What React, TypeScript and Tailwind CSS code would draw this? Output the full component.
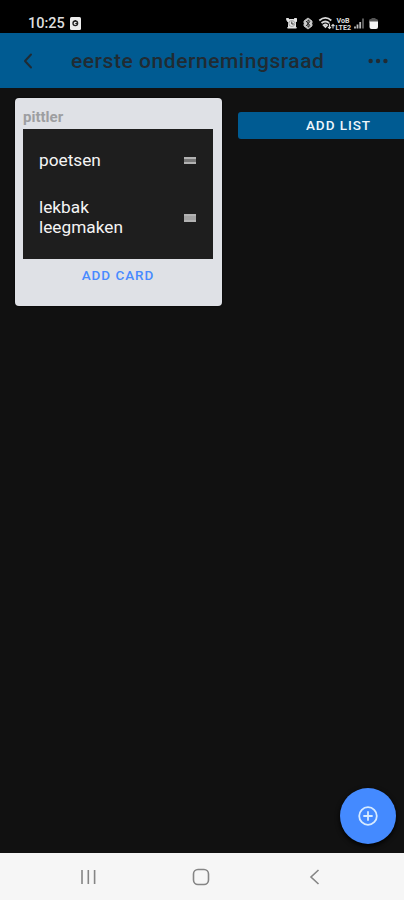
import React from "react";

function StatusBar() {
  return (
    <div className="flex h-[33px] shrink-0 items-end justify-between bg-black pr-[25px] pl-7">
      <div className="flex h-5 items-start gap-[6px]">
        <span className="w-[36px] pt-px text-[14.5px] leading-5 font-medium whitespace-nowrap text-[#dedede]">10:25</span>
        <svg className="mt-[4px]" width="11" height="13" viewBox="0 0 11 13">
          <rect width="11" height="13" rx="1.5" fill="#ededed" />
          <circle cx="5.3" cy="6.3" r="2.3" fill="none" stroke="#222" strokeWidth="1.4" />
          <path d="M5.3 6.5h2M5.3 3v1" stroke="#222" strokeWidth="1.2" />
        </svg>
      </div>
      <svg width="94" height="20" viewBox="285 13 94 20" fill="none" stroke="#d8d8d8">
        <path d="M286.5 18.5h2l1 1h4l1-1h2v3l-1 1v4.5l1 1h-9l1-1v-4.5l-1.500-2z" fill="#e4e4e4" stroke="#e4e4e4" />
        <circle cx="291.800" cy="23.500" r="3" stroke="#888" strokeWidth=".7" />
        <path d="M291.800 21.500v2.500h2" stroke="#333" />
        <path d="M308 18l4 3v5l-4 3l-4-3v-5z" fill="#d0d0d0" stroke="#bdbdbd" />
        <path d="M306 21l4 4.500l-2 1.800v-7.500l2 1.700l-4 4.500M303 23.500h1M312 23.500h1.500" stroke="#222" strokeWidth="1" />
        <path d="M319.300 20.500c3.800-3.200 8.400-3.200 12 0M321.500 23c2.500-2 5.200-2 7.600 0M323.600 25.200c1.200-.9 2.500-.9 3.500 0l-1.700 1.800z" strokeWidth="1.800" />
        <path d="M329.500 23.500v5M328 27l1.500 1.500l1.500-1.500M333 28.500v-4M331.500 26l1.500-1.500l1.500 1.500" strokeWidth="1.100" />
        <text x="336.500" y="22.500" fill="#dedede" stroke="none" fontSize="6.500" fontWeight="700" textLength="13" lengthAdjust="spacingAndGlyphs">VoB</text>
        <text x="335.500" y="29.500" fill="#dedede" stroke="none" fontSize="6.500" fontWeight="700" textLength="15.500" lengthAdjust="spacingAndGlyphs">LTE2</text>
        <path d="M355 28.500v-2M357.500 28.500v-4M360.200 28.500v-6.500" strokeWidth="1.800" stroke="#bcbcbc" />
        <path d="M363 28.500v-10" strokeWidth="1.500" stroke="#777" />
        <path d="M371.500 18h4v1h1q1.500 0 1.500 1.500v2h-9v-2q0-1.500 1.500-1.500h1z" fill="#555" stroke="none" />
        <path d="M369.500 21.500h8.500v5.500q0 2-2 2h-4.500q-2 0-2-2z" fill="#f3f3f3" stroke="none" />
      </svg>
    </div>
  );
}

function Header() {
  return (
    <header className="flex h-[55px] shrink-0 items-center bg-[#005b92] pr-4 pl-[22px] text-[#202b33]">
      <svg width="12" height="18" viewBox="0 0 12 18" fill="none" stroke="currentColor" strokeWidth="2" strokeLinecap="round" strokeLinejoin="round">
        <path d="M9 2.500L3 9l6 6.500" />
      </svg>
      <h1 className="ml-[37px] flex-1 text-[21px] leading-7 font-medium tracking-[0.55px] whitespace-nowrap">eerste ondernemingsraad</h1>
      <svg width="20" height="6" viewBox="0 0 20 6" fill="currentColor">
        <circle cx="2.600" cy="3" r="2.200" />
        <circle cx="10" cy="3" r="2.200" />
        <circle cx="17.400" cy="3" r="2.200" />
      </svg>
    </header>
  );
}

function DragHandle({ solid = false }: { solid?: boolean }) {
  return (
    <div className={`flex w-3 flex-col justify-between ${solid ? "h-2 bg-[#a2a2a2]" : "h-[7px] bg-[#777777]"}`}>
      <span className="h-[2px] bg-[#b2b2b2]" />
      <span className="h-[2px] bg-[#b2b2b2]" />
    </div>
  );
}

function BoardList() {
  return (
    <section className="h-[208px] w-[207px] rounded-[4px] bg-[#dfe1e6] px-2 pt-[11px] shadow-[0_0_2px_#000]">
      <h2 className="h-5 text-[15px] leading-[17px] font-bold text-[#9d9ea1]">pittler</h2>
      <div className="flex h-[130px] w-[190px] flex-col bg-[#1e1e1e] pr-[17px] pl-4 text-[17.25px] leading-5 text-[#f4f4f4]">
        <div className="flex h-[62px] items-center justify-between">
          <span>poetsen</span>
          <DragHandle />
        </div>
        <div className="flex h-[53px] items-center justify-between">
          <span className="-mt-px leading-[20.5px]">
            lekbak
            <br />
            leegmaken
          </span>
          <DragHandle solid />
        </div>
      </div>
      <button className="block h-[33px] w-[190px] text-center text-[13.5px] font-medium tracking-[0.95px] text-[#488aff]">ADD CARD</button>
    </section>
  );
}

function NavigationBar() {
  return (
    <nav className="flex h-[47px] shrink-0 items-center bg-[#f6f6f6] pl-[80px] text-[#858585]">
      <svg width="17" height="16" viewBox="0 0 17 16" fill="none" stroke="currentColor" strokeWidth="1.600">
        <path d="M2 1v14M8.300 1v14M14.600 1v14" />
      </svg>
      <svg className="ml-[95px]" width="18" height="18" viewBox="0 0 18 18" fill="none" stroke="currentColor" strokeWidth="1.600">
        <rect x="1.500" y="1.500" width="15" height="15" rx="4.500" />
      </svg>
      <svg className="ml-[98px]" width="12" height="16" viewBox="0 0 12 16" fill="none" stroke="currentColor" strokeWidth="1.600">
        <path d="M10.500 1L3 8l7.500 7" />
      </svg>
    </nav>
  );
}

export default function App() {
  return (
    <div className="flex h-[900px] w-[404px] flex-col overflow-hidden bg-[#111111] font-[Roboto,sans-serif]">
      <StatusBar />
      <Header />
      <main className="relative flex flex-1 items-start gap-4 overflow-hidden pt-[10px] pl-[15px]">
        <div className="shrink-0">
          <BoardList />
        </div>
        <button className="mt-[14px] h-[27px] w-[201px] shrink-0 rounded-[3px] bg-[#005b92] text-[13.5px] font-medium tracking-[0.95px] text-[#eef5fa]">ADD LIST</button>
        <button aria-label="Add" className="absolute right-2 bottom-[9px] flex size-14 items-center justify-center rounded-full bg-[#448aff] text-[#d7ebff] shadow-[0_2px_5px_#000]">
          <svg width="22" height="22" viewBox="0 0 22 22" fill="none" stroke="currentColor" strokeWidth="1.800">
            <circle cx="11" cy="11" r="8.800" />
            <path d="M11 7v8M7 11h8" strokeLinecap="round" />
          </svg>
        </button>
      </main>
      <NavigationBar />
    </div>
  );
}
